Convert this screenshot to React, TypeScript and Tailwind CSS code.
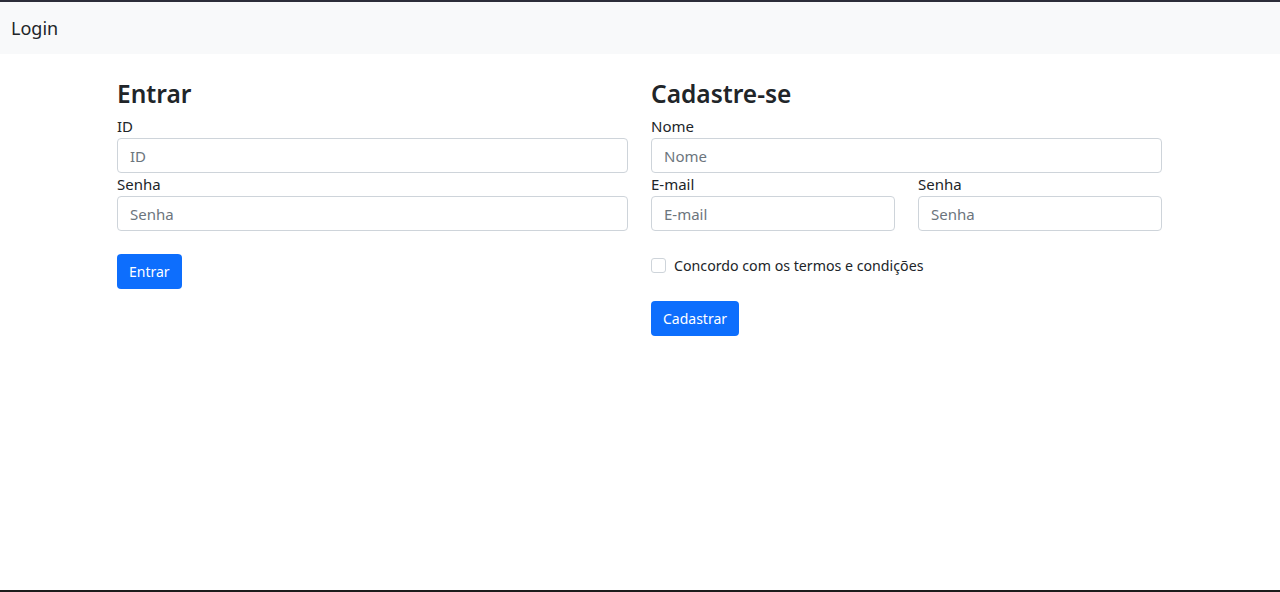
import React from 'react';

const Field: React.FC<{ label: string; placeholder: string; type?: string }> = ({ label, placeholder, type = 'text' }) => (
  <div className="flex flex-col">
    <label className="text-[15px] leading-[23px] text-[#212529]">{label}</label>
    <input
      type={type}
      placeholder={placeholder}
      className="h-[35px] w-full rounded-[4px] border border-[#ced4da] bg-white px-[12px] text-[15px] text-[#212529] outline-none placeholder:text-[#6c757d]"
    />
  </div>
);

const App: React.FC = () => {
  return (
    <div className="flex h-[592px] flex-col bg-white font-['Noto_Sans',sans-serif]">
      <div className="h-[2px] bg-[#2c2d39]"></div>

      {/* Navbar */}
      <nav className="flex h-[52px] items-center bg-[#f8f9fa] px-[11px]">
        <span className="text-[18px] text-[#212529]">Login</span>
      </nav>

      <main className="flex-1 pl-[117px] pt-[21px]">
        <div className="flex gap-[23px]">
          {/* Entrar */}
          <section className="flex w-[511px] flex-col">
            <h3 className="mb-[3px] text-[24.5px] font-semibold leading-[37px] text-[#212529]">Entrar</h3>
            <Field label="ID" placeholder="ID" />
            <Field label="Senha" placeholder="Senha" type="password" />
            <div className="mt-[23px]">
              <button className="h-[35px] rounded-[4px] bg-[#0d6efd] px-[12px] text-[14px] text-white">Entrar</button>
            </div>
          </section>

          {/* Cadastre-se */}
          <section className="flex w-[511px] flex-col">
            <h3 className="mb-[3px] text-[24.5px] font-semibold leading-[37px] text-[#212529]">Cadastre-se</h3>
            <Field label="Nome" placeholder="Nome" />
            <div className="grid grid-cols-2 gap-[23px]">
              <Field label="E-mail" placeholder="E-mail" type="email" />
              <Field label="Senha" placeholder="Senha" type="password" />
            </div>
            <label className="mt-[23px] flex items-center gap-[8px] text-[14.2px] leading-[23px] text-[#212529]">
              <span className="h-[15px] w-[15px] rounded-[3px] border border-[#ced4da] bg-white"></span>
              Concordo com os termos e condições
            </label>
            <div className="mt-[24px]">
              <button className="h-[35px] rounded-[4px] bg-[#0d6efd] px-[12px] text-[14px] text-white">Cadastrar</button>
            </div>
          </section>
        </div>
      </main>

      <div className="h-[2px] bg-[#1c1c1c]"></div>
    </div>
  );
};

export default App;
